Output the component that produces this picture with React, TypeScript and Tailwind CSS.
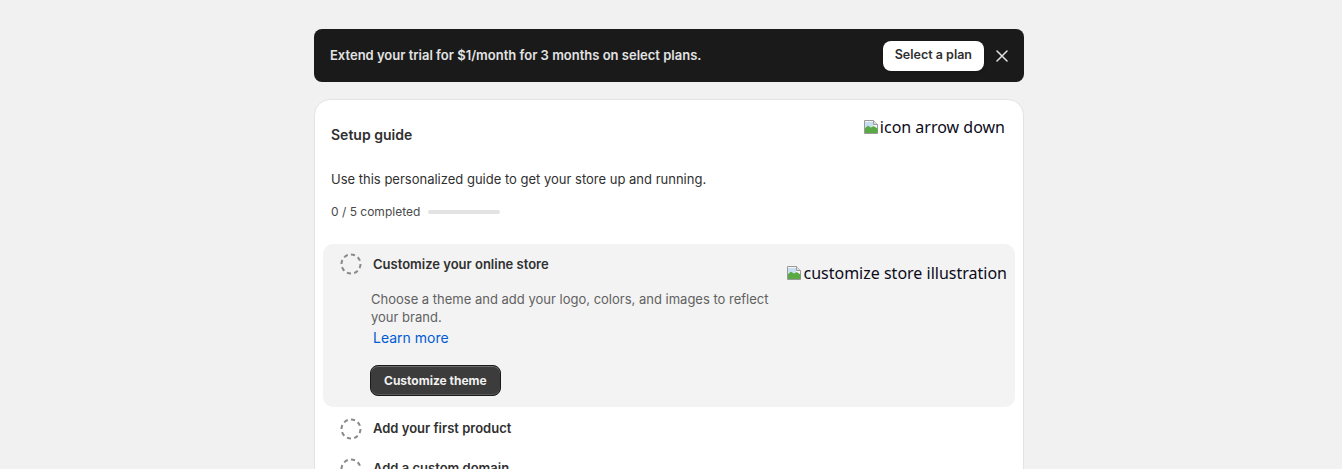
import React from "react";

function BrokenImage({ alt }: { alt: string }) {
  return (
    <span className="inline-flex items-center text-[16px] leading-[20px] text-[#0b0b1a] font-['Noto_Sans',Arial,sans-serif]">
      <svg width="16" height="16" viewBox="0 0 16 16" className="mr-[1px]">
        <path d="M1.5 1.5h9l4 4v9h-13z" fill="#f4f4f4" stroke="#9a9a9a" />
        <path d="M10.5 1.5v4h4" fill="#e0e0e0" stroke="#9a9a9a" />
        <path d="M2 9l3-2.5 3 2 2.5-1.5 4 2.5v4.5H2z" fill="#59a944" />
        <path d="M2 3h8v3.5l-2.5 2-2.5-2-3 2.5z" fill="#a9cdec" opacity="0.6" />
      </svg>
      {alt}
    </span>
  );
}

function DashedCircle() {
  return (
    <svg width="22" height="22" viewBox="0 0 22 22" className="shrink-0">
      <circle cx="11" cy="11" r="9.5" fill="none" stroke="#8a8a8a" strokeWidth="2" strokeDasharray="4.2 3.2" />
    </svg>
  );
}

function StepRow({ title }: { title: string }) {
  return (
    <div className="flex items-center gap-[11px] px-[17px] pt-[11px] pb-[7px]">
      <DashedCircle />
      <span className="text-[13px] font-semibold text-[#303030]">{title}</span>
    </div>
  );
}

export default function App() {
  return (
    <div className="min-h-screen bg-[#f1f1f1] font-['Inter',sans-serif] text-[#303030]">
      <div className="ml-[314px] w-[710px] pt-[29px]">
        {/* trial banner */}
        <div className="flex h-[53px] items-center rounded-[8px] bg-[#1a1a1a] pl-4 pr-[12px]">
          <span className="flex-1 text-[13px] font-semibold text-[#e3e3e3]">
            Extend your trial for $1/month for 3 months on select plans.
          </span>
          <button className="h-[30px] rounded-[8px] bg-white px-[12px] text-[12.5px] font-semibold text-[#303030] shadow-sm">
            Select a plan
          </button>
          <button className="ml-[8px] flex h-[20px] w-[20px] items-center justify-center text-[#e3e3e3]">
            <svg width="12" height="12" viewBox="0 0 12 12">
              <path d="M1 1l10 10M11 1L1 11" stroke="currentColor" strokeWidth="1.5" strokeLinecap="round" />
            </svg>
          </button>
        </div>

        {/* setup guide card */}
        <div className="mt-[17px] h-[400px] rounded-t-[16px] border border-[#e3e3e3] bg-white">
          <div className="px-4">
            <div className="flex items-start justify-between pt-[17px] pr-[2px]">
              <h2 className="mt-[8px] text-[14px] leading-[20px] font-semibold text-[#303030]">Setup guide</h2>
              <BrokenImage alt="icon arrow down" />
            </div>
            <p className="mt-[24px] text-[13px] leading-[20px] text-[#303030]">
              Use this personalized guide to get your store up and running.
            </p>
            <div className="mt-[15px] flex items-center gap-[8px]">
              <span className="text-[12px] leading-[16px] text-[#4a4a4a]">0 / 5 completed</span>
              <div className="h-[4px] w-[72px] rounded-full bg-[#e3e3e3]" />
            </div>
          </div>

          <div className="mx-[8px] mt-[24px]">
            {/* active step */}
            <div className="flex justify-between rounded-[10px] bg-[#f3f3f3] pl-[17px] pr-[8px] pt-[9px] pb-[11px]">
              <div className="flex gap-[11px]">
                <DashedCircle />
                <div className="flex flex-col">
                  <span className="text-[13px] leading-[22px] font-semibold text-[#303030]">Customize your online store</span>
                  <p className="-ml-[2px] mt-[15px] w-[410px] text-[13px] leading-[18px] text-[#616161]">
                    Choose a theme and add your logo, colors, and images to reflect your brand.
                  </p>
                  <a className="mt-[2px] text-[14px] leading-[20px] text-[#005bd3]">Learn more</a>
                  <div>
                    <button className="-ml-[3px] mt-[17px] h-[31px] rounded-[8px] border border-[#1a1a1a] bg-[#3c3c3c] px-[13px] text-[12px] font-bold text-[#f1f1f1] shadow-[inset_0_1px_0_rgba(255,255,255,0.25),inset_0_-1px_0_rgba(255,255,255,0.15)]">
                      Customize theme
                    </button>
                  </div>
                </div>
              </div>
              <div className="mt-[10px]">
                <BrokenImage alt="customize store illustration" />
              </div>
            </div>

            <StepRow title="Add your first product" />
            <StepRow title="Add a custom domain" />
          </div>
        </div>
      </div>
    </div>
  );
}
